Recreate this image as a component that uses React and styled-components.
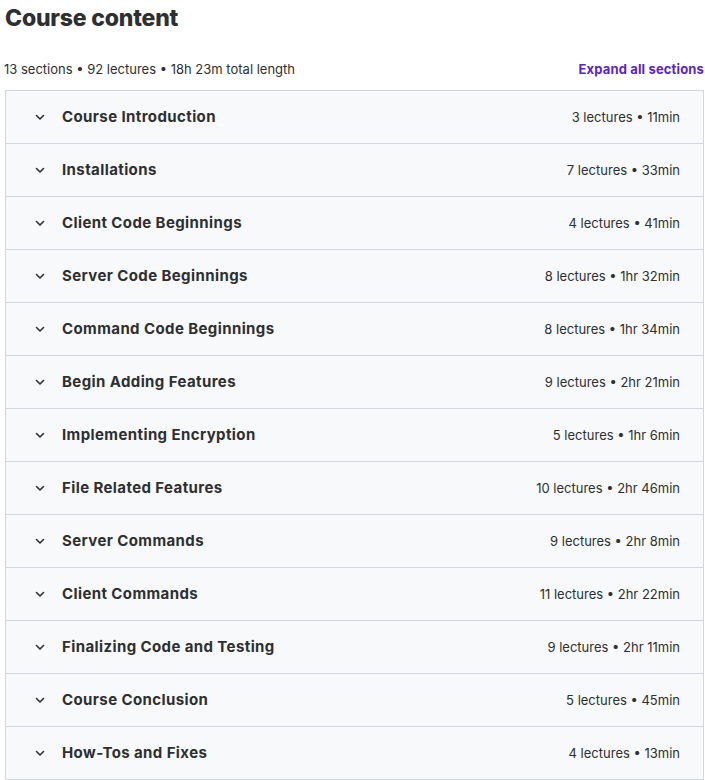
import React from "react";
import styled, { createGlobalStyle } from "styled-components";

const Global = createGlobalStyle`
  body {
    margin: 0;
    background: #fff;
    font-family: Inter, "Noto Sans", sans-serif;
    color: #2d2f31;
  }
`;

const Page = styled.div`
  padding: 2px 1px 0 5px;
`;

const Title = styled.h2`
  margin: 0;
  font-size: 23px;
  line-height: 32px;
  font-weight: 800;
  letter-spacing: -0.2px;
  color: #2d2f31;
`;

const Meta = styled.div`
  display: flex;
  justify-content: space-between;
  align-items: center;
  margin-top: 25px;
  height: 20px;
  margin-bottom: 11px;
`;

const Summary = styled.span`
  font-size: 13px;
  color: #2d2f31;
  margin-left: -1px;
`;

const ExpandLink = styled.button`
  border: 0;
  background: none;
  padding: 0;
  font: inherit;
  font-size: 13px;
  font-weight: 700;
  letter-spacing: 0.15px;
  color: #5624d0;
  cursor: pointer;
`;

const Box = styled.div`
  border: 1px solid #d1d7dc;
  border-bottom: 0;
`;

const Row = styled.div`
  display: flex;
  align-items: center;
  height: 53px;
  padding: 0 23px 1px 28px;
  box-sizing: border-box;
  background: #f7f9fa;
  border-bottom: 1px solid #d1d7dc;
`;

const Chevron = styled.span`
  display: flex;
  width: 12px;
  color: #2d2f31;
  margin-right: 16px;
`;

const SectionTitle = styled.span`
  flex: 1;
  font-size: 15px;
  font-weight: 700;
  letter-spacing: 0.4px;
  color: #2d2f31;
`;

const Stats = styled.span`
  font-size: 13px;
  color: #2d2f31;
`;

const sections = [
  ["Course Introduction", "3 lectures • 11min"],
  ["Installations", "7 lectures • 33min"],
  ["Client Code Beginnings", "4 lectures • 41min"],
  ["Server Code Beginnings", "8 lectures • 1hr 32min"],
  ["Command Code Beginnings", "8 lectures • 1hr 34min"],
  ["Begin Adding Features", "9 lectures • 2hr 21min"],
  ["Implementing Encryption", "5 lectures • 1hr 6min"],
  ["File Related Features", "10 lectures • 2hr 46min"],
  ["Server Commands", "9 lectures • 2hr 8min"],
  ["Client Commands", "11 lectures • 2hr 22min"],
  ["Finalizing Code and Testing", "9 lectures • 2hr 11min"],
  ["Course Conclusion", "5 lectures • 45min"],
  ["How-Tos and Fixes", "4 lectures • 13min"],
];

const ChevronIcon = () => (
  <svg width="12" height="12" viewBox="0 0 12 12" fill="none">
    <path d="M2.5 4.5 L6 8 L9.5 4.5" stroke="currentColor" strokeWidth="1.6" strokeLinecap="round" strokeLinejoin="round" />
  </svg>
);

export default function App() {
  return (
    <Page>
      <Global />
      <Title>Course content</Title>
      <Meta>
        <Summary>13 sections • 92 lectures • 18h 23m total length</Summary>
        <ExpandLink>Expand all sections</ExpandLink>
      </Meta>
      <Box>
        {sections.map(([name, stats]) => (
          <Row key={name}>
            <Chevron>
              <ChevronIcon />
            </Chevron>
            <SectionTitle>{name}</SectionTitle>
            <Stats>{stats}</Stats>
          </Row>
        ))}
      </Box>
    </Page>
  );
}
